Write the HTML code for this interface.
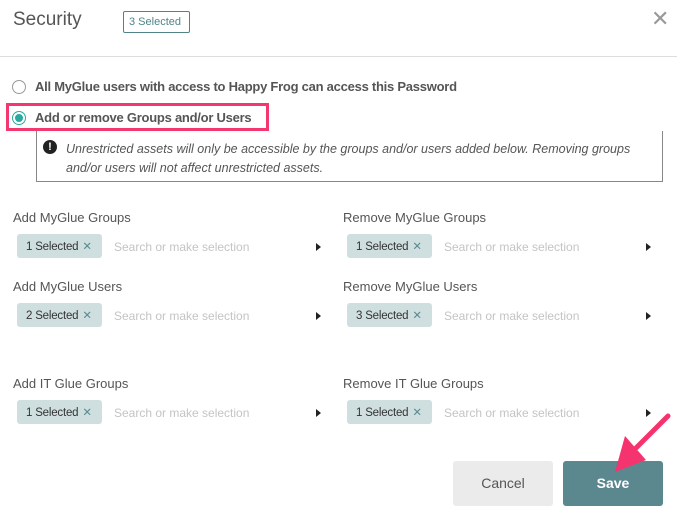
<!DOCTYPE html>
<html><head><style>
*{box-sizing:border-box;margin:0;padding:0}
body{width:677px;height:520px;background:#fff;font-family:"Liberation Sans",sans-serif;color:#555;position:relative;overflow:hidden}
.a{position:absolute}
.lbl{font-size:13px;color:#555}
.tag{position:absolute;height:24px;width:85px;background:#cfdfe0;border-radius:3px;font-size:11.5px;color:#333;padding:5px 0 0 9px;letter-spacing:-0.2px}
.tag span{color:#5a8a8e;margin-left:4px}
.ph{position:absolute;font-size:12px;color:#c4c4c4}
.tri{position:absolute;width:0;height:0;border-top:4px solid transparent;border-bottom:4px solid transparent;border-left:5px solid #222}
.b{font-size:13px;font-weight:bold;color:#555;letter-spacing:-0.25px}
</style></head><body>
<div class="a" style="left:13px;top:9px;font-size:19px;color:#555">Security</div>
<div class="a" style="left:123px;top:11px;width:67px;height:22px;border:1px solid #4f8589;border-radius:2px;font-size:11px;color:#4f8589;padding:4px 0 0 5px">3 Selected</div>
<div class="a" style="left:651px;top:6px;font-size:22px;color:#999">✕</div>
<div class="a" style="left:0;top:56px;width:677px;height:1px;background:#ddd"></div>

<div class="a" style="left:12px;top:80px;width:14px;height:14px;border:1px solid #999;border-radius:50%"></div>
<div class="a b" style="left:35px;top:79px">All MyGlue users with access to Happy Frog can access this Password</div>

<div class="a" style="left:6px;top:103px;width:263px;height:28px;border:3px solid #f2386f"></div>
<div class="a" style="left:12px;top:111px;width:14px;height:14px;border:1px solid #2aa9a0;border-radius:50%"></div>
<div class="a" style="left:15px;top:114px;width:8px;height:8px;background:#2aa9a0;border-radius:50%"></div>
<div class="a b" style="left:35px;top:110px">Add or remove Groups and/or Users</div>

<div class="a" style="left:36px;top:131px;width:627px;height:51px;border:1px solid #888;border-top:none"></div>
<div class="a" style="left:43px;top:140px;width:14px;height:14px;background:#222;border-radius:50%;color:#fff;font-size:11px;font-weight:bold;text-align:center;line-height:14px">!</div>
<div class="a" style="left:66px;top:140px;width:590px;font-size:12.5px;font-style:italic;color:#555;line-height:19px">Unrestricted assets will only be accessible by the groups and/or users added below. Removing groups and/or users will not affect unrestricted assets.</div>

<div class="a lbl" style="left:13px;top:210px">Add MyGlue Groups</div>
<div class="tag" style="left:17px;top:234px">1 Selected<span>✕</span></div>
<div class="ph" style="left:114px;top:240px">Search or make selection</div><div class="tri" style="left:316px;top:243px"></div>
<div class="a lbl" style="left:343px;top:210px">Remove MyGlue Groups</div>
<div class="tag" style="left:347px;top:234px">1 Selected<span>✕</span></div>
<div class="ph" style="left:444px;top:240px">Search or make selection</div><div class="tri" style="left:646px;top:243px"></div>

<div class="a lbl" style="left:13px;top:279px">Add MyGlue Users</div>
<div class="tag" style="left:17px;top:303px">2 Selected<span>✕</span></div>
<div class="ph" style="left:114px;top:309px">Search or make selection</div><div class="tri" style="left:316px;top:312px"></div>
<div class="a lbl" style="left:343px;top:279px">Remove MyGlue Users</div>
<div class="tag" style="left:347px;top:303px">3 Selected<span>✕</span></div>
<div class="ph" style="left:444px;top:309px">Search or make selection</div><div class="tri" style="left:646px;top:312px"></div>

<div class="a lbl" style="left:13px;top:376px">Add IT Glue Groups</div>
<div class="tag" style="left:17px;top:400px">1 Selected<span>✕</span></div>
<div class="ph" style="left:114px;top:406px">Search or make selection</div><div class="tri" style="left:316px;top:409px"></div>
<div class="a lbl" style="left:343px;top:376px">Remove IT Glue Groups</div>
<div class="tag" style="left:347px;top:400px">1 Selected<span>✕</span></div>
<div class="ph" style="left:444px;top:406px">Search or make selection</div><div class="tri" style="left:646px;top:409px"></div>

<div class="a" style="left:453px;top:461px;width:100px;height:45px;background:#ebebeb;border-radius:3px;font-size:14px;color:#555;text-align:center;line-height:45px">Cancel</div>
<div class="a" style="left:563px;top:461px;width:100px;height:45px;background:#5a888e;border-radius:3px;font-size:14px;font-weight:bold;color:#fff;text-align:center;line-height:45px">Save</div>

<svg class="a" style="left:0;top:0" width="677" height="520">
<line x1="668" y1="416" x2="634" y2="450" stroke="#f5336f" stroke-width="5" stroke-linecap="round"/>
<polygon points="625,436 615,472 646,460" fill="#f5336f"/>
</svg>
</body></html>
